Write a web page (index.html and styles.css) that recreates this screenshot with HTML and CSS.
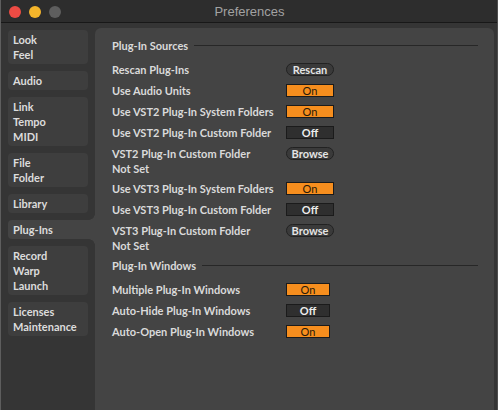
FILE: index.html
```html
<!DOCTYPE html>
<html>
<head>
<meta charset="utf-8">
<link rel="stylesheet" href="styles.css">
</head>
<body>
<div class="window">
  <header class="titlebar">
    <div class="lights">
      <span class="light red"></span>
      <span class="light yellow"></span>
      <span class="light gray"></span>
    </div>
    <div class="title">Preferences</div>
    <div class="spacer"></div>
  </header>
  <div class="main">
    <nav class="sidebar">
      <div class="tab">Look<br>Feel</div>
      <div class="tab">Audio</div>
      <div class="tab">Link<br>Tempo<br>MIDI</div>
      <div class="tab">File<br>Folder</div>
      <div class="tab">Library</div>
      <div class="tab active">Plug-Ins</div>
      <div class="tab">Record<br>Warp<br>Launch</div>
      <div class="tab">Licenses<br>Maintenance</div>
    </nav>
    <section class="panel">
      <div class="heading">Plug-In Sources</div>
      <div class="row"><span class="label">Rescan Plug-Ins</span><span class="btn pill">Rescan</span></div>
      <div class="row"><span class="label">Use Audio Units</span><span class="btn on">On</span></div>
      <div class="row"><span class="label">Use VST2 Plug-In System Folders</span><span class="btn on">On</span></div>
      <div class="row"><span class="label">Use VST2 Plug-In Custom Folder</span><span class="btn off">Off</span></div>
      <div class="row"><span class="label">VST2 Plug-In Custom Folder</span><span class="btn pill">Browse</span></div>
      <div class="sub">Not Set</div>
      <div class="row"><span class="label">Use VST3 Plug-In System Folders</span><span class="btn on">On</span></div>
      <div class="row"><span class="label">Use VST3 Plug-In Custom Folder</span><span class="btn off">Off</span></div>
      <div class="row"><span class="label">VST3 Plug-In Custom Folder</span><span class="btn pill">Browse</span></div>
      <div class="sub">Not Set</div>
      <div class="heading second">Plug-In Windows</div>
      <div class="row"><span class="label">Multiple Plug-In Windows</span><span class="btn on narrow">On</span></div>
      <div class="row"><span class="label">Auto-Hide Plug-In Windows</span><span class="btn off narrow">Off</span></div>
      <div class="row"><span class="label">Auto-Open Plug-In Windows</span><span class="btn on narrow">On</span></div>
    </section>
  </div>
</div>
</body>
</html>
```
FILE: styles.css
```css
* { box-sizing: border-box; }
html, body {
  margin: 0;
  padding: 0;
  width: 498px;
  height: 410px;
  overflow: hidden;
  background: #353535;
}
.window {
  width: 498px;
  height: 410px;
  display: flex;
  flex-direction: column;
  border-left: 1px solid #5e5e5e;
  border-right: 1px solid #4e4e4e;
  background: #353535;
  font-family: "Lato", "Liberation Sans", sans-serif;
}
.titlebar {
  height: 23px;
  flex: 0 0 23px;
  display: grid;
  grid-template-columns: 1fr auto 1fr;
  align-items: center;
  background: #2d2d2d;
  border-bottom: 1px solid #181818;
}
.lights {
  display: flex;
  gap: 8px;
  padding-left: 8px;
  padding-top: 1px;
}
.light {
  width: 12px;
  height: 12px;
  border-radius: 50%;
}
.red { background: #ed4b44; }
.yellow { background: #f4b52b; }
.gray { background: #5e5e5e; }
.title {
  font-family: "Liberation Sans", Arial, sans-serif;
  font-size: 13px;
  color: #a2a2a2;
  padding-top: 1px;
  padding-left: 1px;
}
.main {
  flex: 1;
  display: flex;
  padding: 5px 3px 0 7px;
  min-height: 0;
}
.sidebar {
  width: 87px;
  flex: 0 0 87px;
  display: flex;
  flex-direction: column;
  gap: 7px;
  padding-top: 2px;
}
.tab {
  width: 80px;
  background: #3e3e3e;
  border-radius: 4px;
  padding: 2px 5px;
  font-size: 11px;
  font-weight: 700;
  line-height: 15px;
  color: #dcdcdc;
}
.tab.active {
  width: 87px;
  background: #444444;
  border-radius: 4px 0 0 4px;
  position: relative;
}
.tab.active::before,
.tab.active::after {
  content: "";
  position: absolute;
  right: 0;
  width: 6px;
  height: 6px;
}
.tab.active::before {
  top: -6px;
  background: radial-gradient(circle at 0 0, transparent 5.5px, #444444 6px);
}
.tab.active::after {
  bottom: -6px;
  background: radial-gradient(circle at 0 100%, transparent 5.5px, #444444 6px);
}
.panel {
  flex: 1;
  background: #444444;
  border-radius: 6px 6px 0 0;
  padding: 7px 16px 0 17px;
  color: #dadada;
  font-size: 11px;
  font-weight: 700;
}
.heading {
  display: flex;
  align-items: center;
  gap: 6px;
  height: 21px;
  margin-bottom: 3px;
}
.heading.second {
  margin-top: 1px;
}
.heading::after {
  content: "";
  flex: 1;
  height: 1px;
  background: #272727;
}
.row {
  display: flex;
  align-items: center;
  height: 21px;
}
.label {
  flex: 0 0 174px;
}
.sub {
  line-height: 14px;
  margin: -2px 0 2px;
}
.btn {
  width: 48px;
  height: 13px;
  border: 1px solid #1b1b1b;
  font-size: 11px;
  line-height: 11px;
  text-align: center;
  font-weight: 700;
}
.btn.narrow { width: 44px; }
.on {
  background: #f68e1e;
  color: #2a1a08;
  font-weight: 400;
}
.off {
  background: #2f2f2f;
  color: #ececec;
}
.pill {
  background: #3a3a3a;
  border-color: #222222;
  border-radius: 7px;
  color: #e4e4e4;
}
```
